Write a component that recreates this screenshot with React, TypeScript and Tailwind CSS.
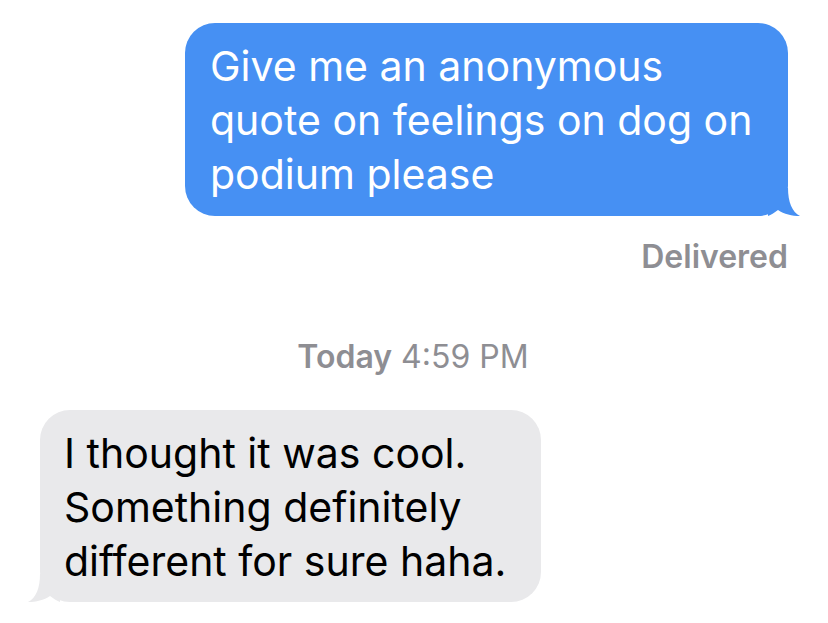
import React from 'react';

const FONT = "font-['Inter','Roboto',sans-serif]";

const BlueTail = () => (
  <svg className="absolute -right-3 bottom-0" width="32" height="28" viewBox="0 0 32 28">
    <path d="M0 0 H20 C20 14 24 24 32 28 C24 28 16 26 10 22 C6 25 3 27 0 28 Z" fill="#4690f3" />
  </svg>
);

const GrayTail = () => (
  <svg className="absolute -left-3 bottom-0" width="32" height="28" viewBox="0 0 32 28">
    <path d="M32 0 H12 C12 14 8 24 0 28 C8 28 16 26 22 22 C26 25 29 27 32 28 Z" fill="#e9e9eb" />
  </svg>
);

export default function App() {
  return (
    <div className={`w-[828px] h-[623px] bg-white overflow-hidden ${FONT}`}>
      <div className="flex flex-col px-10 pt-[23px]">
        <div className="flex justify-end">
          <div className="relative w-[603px] rounded-[30px] bg-[#4690f3] px-[25px] pt-[16px] pb-[15px] text-white text-[41px] leading-[54px]">
            <div>Give me an anonymous</div>
            <div>quote on feelings on dog on</div>
            <div>podium please</div>
            <BlueTail />
          </div>
        </div>
        <div className="mt-[22px] text-right text-[32px] leading-[38px] font-semibold text-[#8e8e93]">
          Delivered
        </div>
        <div className="mt-[62px] text-center text-[32px] leading-[38px] text-[#8e8e93] pr-[2px]">
          <span className="font-semibold">Today</span> 4:59 PM
        </div>
        <div className="mt-[34px] flex">
          <div className="relative w-[501px] rounded-[30px] bg-[#e9e9eb] px-[24px] pt-[16px] pb-[14px] text-black text-[41px] leading-[54px]">
            <div>I thought it was cool.</div>
            <div>Something definitely</div>
            <div>different for sure haha.</div>
            <GrayTail />
          </div>
        </div>
      </div>
    </div>
  );
}
